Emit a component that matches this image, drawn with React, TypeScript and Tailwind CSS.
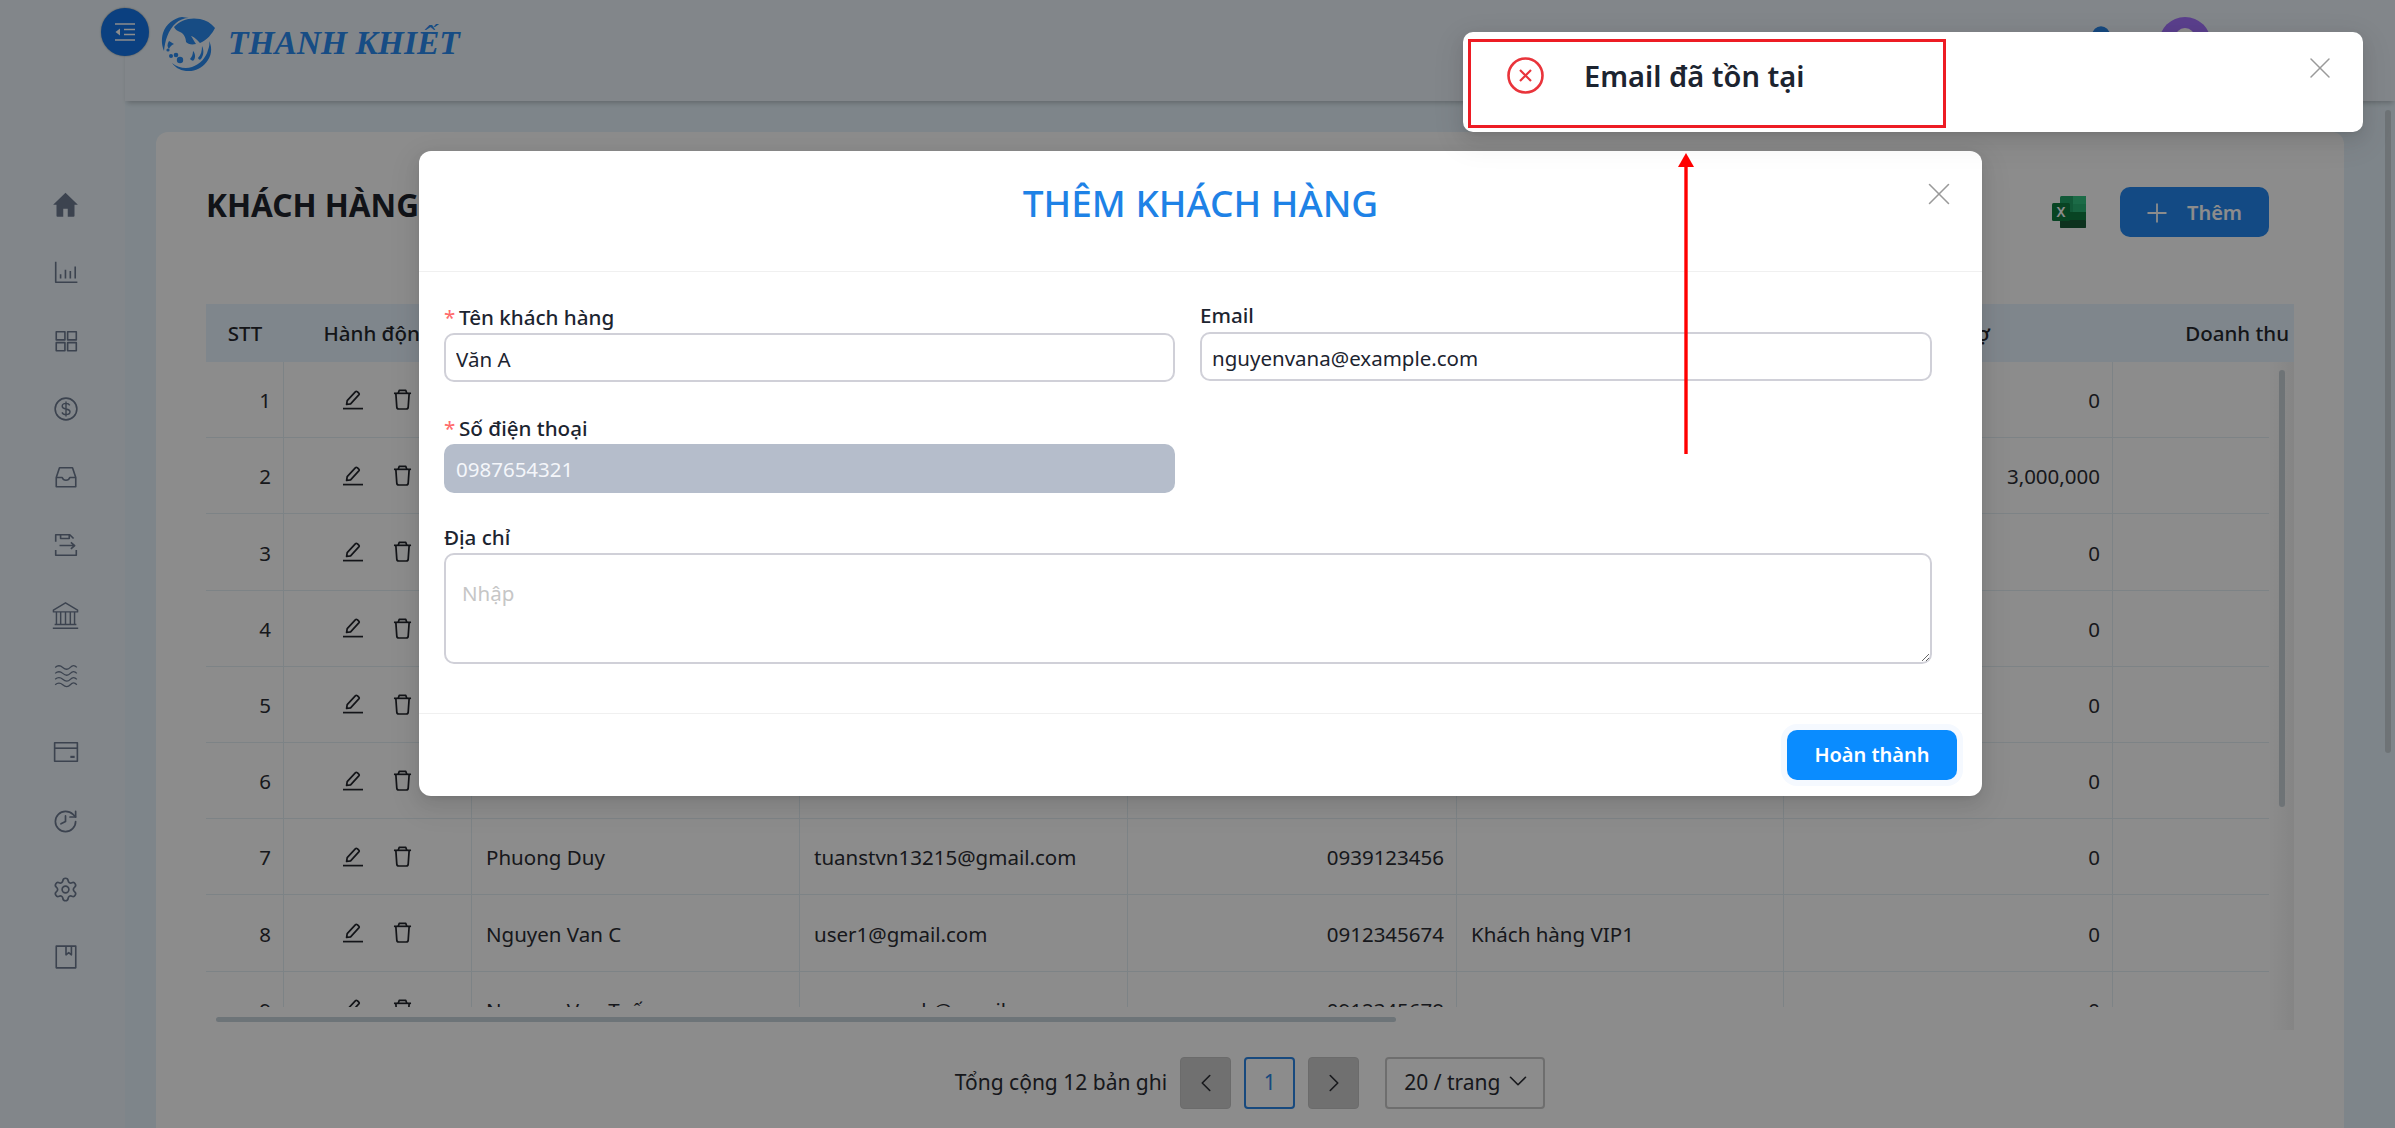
import React from "react";
import { X, ChevronLeft, ChevronRight, ChevronDown, Bell, Settings, History } from "lucide-react";

const S = ({ children, className = "" }: { children: React.ReactNode; className?: string }) => (
  <svg viewBox="0 0 24 24" fill="none" stroke="currentColor" strokeWidth="1.5" strokeLinejoin="round" className={"w-[26px] h-[26px] " + className}>
    {children}
  </svg>
);

const sideIcons: React.ReactNode[] = [
  <svg viewBox="0 0 24 24" className="w-[27px] h-[27px]" fill="currentColor"><path d="M12 1.5 1 12.3h3V22a.8.8 0 0 0 .8.8h5.2v-7h4v7h5.2A.8.8 0 0 0 20 22v-9.7h3z" /></svg>,
  <S><path d="M2.5 2.5V21.5H22.5" /><path d="M7 18v-4M11.5 18V10M16 18v-7M20.5 18V7" /></S>,
  <S><rect x="3" y="3.5" width="8" height="7.5" /><rect x="13.5" y="3.5" width="8" height="7.5" /><rect x="3" y="13.5" width="8" height="7.5" /><rect x="13.5" y="13.5" width="8" height="7.5" /></S>,
  <S><circle cx="12" cy="12" r="10" /><path d="M15.5 8.7c-.6-1.2-2-1.9-3.5-1.9-2 0-3.5 1-3.5 2.6 0 3.6 7.2 1.6 7.2 5.2 0 1.6-1.6 2.6-3.7 2.6-1.6 0-3.1-.8-3.7-2.1M12 5v14" strokeWidth="1.3" /></S>,
  <S><path d="M3 12.5 6 3.5h12l3 9V21H3z" /><path d="M3 12.5h5.5c.6 1.7 1.9 2.5 3.5 2.5s2.9-.8 3.5-2.5H21" /></S>,
  <S><path d="M2.5 9V2.5h13L19 6" /><path d="M7 2.5V6h8V2.5" /><path d="M6 12.5h14M16.5 9.5l3.5 3-3.5 3" /><path d="M2.5 16.5V21.5h19v-5" /></S>,
  <svg viewBox="0 0 24 24" fill="none" stroke="currentColor" strokeWidth="1.2" strokeLinejoin="round" className="w-[29px] h-[29px]"><path d="M12 1.5 2 7.5v1.5h20V7.5z" /><path d="M4.5 9v10M8 9v10M12 9v10M16 9v10M19.5 9v10" /><path d="M3 19.5h18M1.5 22.5h21" /></svg>,
  <S><path d="M2 5c2.5-2.2 4.5-2.2 7 0s5 2.2 7 0 4-2.2 6 0M2 10.5c2.5-2.2 4.5-2.2 7 0s5 2.2 7 0 4-2.2 6 0M2 16c2.5-2.2 4.5-2.2 7 0s5 2.2 7 0 4-2.2 6 0M2 21c2.5-2.2 4.5-2.2 7 0s5 2.2 7 0 4-2.2 6 0" strokeWidth="1.2" /></S>,
  <S><rect x="1.5" y="3.5" width="21" height="17" /><path d="M1.5 8.5h21" /><path d="M16 16.5h4" strokeWidth="2" /></S>,
  <History className="w-[27px] h-[27px] -scale-x-100" strokeWidth={1.5} />,
  <Settings className="w-[27px] h-[27px]" strokeWidth={1.5} />,
  <S><rect x="3" y="2" width="18" height="20" /><path d="M12 2v8l2.5-2 2.5 2V2" /></S>,
];
const sideGaps = ["mb-[38px]", "mb-[39px]", "mb-[38px]", "mb-[38px]", "mb-[38px]", "mb-[40px]", "mb-[30px]", "mb-[47px]", "mb-[39px]", "mb-[38px]", "mb-[38px]", ""];

const EditIcon = () => (
  <svg viewBox="0 0 20 20" fill="none" stroke="currentColor" strokeWidth="1.7" className="w-[20px] h-[20px]">
    <path d="M3.6 14.5 4.2 10.6 12.3 1.8c.6-.6 1.3-.6 1.9-.1l1.5 1.3c.6.6.6 1.3.1 1.9L7.6 13.8z" strokeLinejoin="round" />
    <path d="M0 18.6h20" />
  </svg>
);
const TrashIcon = () => (
  <svg viewBox="0 0 20 22" fill="none" stroke="currentColor" strokeWidth="1.8" strokeLinejoin="round" className="w-[19px] h-[21px]">
    <path d="M1 4.5h18" />
    <path d="M5.5 4.5 6.5 1.5h7l1 3" />
    <path d="M3 4.5 4 19c.1 1.2.8 2 2 2h8c1.2 0 1.9-.8 2-2l1-14.5" />
  </svg>
);

const rows = [
  { n: 1, debt: "0" },
  { n: 2, debt: "3,000,000" },
  { n: 3, debt: "0" },
  { n: 4, debt: "0" },
  { n: 5, debt: "0" },
  { n: 6, debt: "0" },
  { n: 7, name: "Phuong Duy", email: "tuanstvn13215@gmail.com", phone: "0939123456", debt: "0" },
  { n: 8, name: "Nguyen Van C", email: "user1@gmail.com", phone: "0912345674", note: "Khách hàng VIP1", debt: "0" },
  { n: 9, name: "Nguyen Van Tuấn", email: "nguyenvanb@gmail.com", phone: "0912345678", debt: "0" },
];

const cols = "grid grid-cols-[78px_188px_328px_328px_329px_327px_329px_181px]";
const cell = "pl-[14px] pr-[12px] pt-[2px] flex items-center border-r border-[#e3eef5] whitespace-nowrap";

const Logo = () => (
  <svg viewBox="0 0 58 56" className="w-[58px] h-[56px]" fill="#2a8af0">
    <path d="M22 2C14 3 6 9 3 18 1 25 2 31 4 36 5 26 8 15 16 8 19 5 24 3 29 3z" />
    <path d="M14 12c6-7 16-10 26-8 6 1 11 4 15 9-3 6-8 12-15 15-2-2-5-6-9-7 2 3 3 5 5 8-5 1-8 0-10-2 0-5-3-9-6-10-3-1-5-3-6-5z" />
    <path d="M9 26c-2 3-2 6 0 8 1-2 2-4 5-5-2-1-3-2-5-3z" />
    <circle cx="11" cy="41" r="2" /><circle cx="8" cy="35" r="1.6" /><circle cx="16" cy="40" r="2.3" /><circle cx="20" cy="45" r="3.2" />
    <path d="M12 48c6 5 14 6 20 4 8-3 14-9 16-17 1-3 2-6 1-9 3 5 3 13-1 19-5 8-13 12-22 11-7-1-11-4-14-8z" />
    <path d="M30 44c2-2 3-5 3-8 2 2 3 6 1 9-1 1-2 1-4-1zM38 43c3-3 4-7 4-12 2 4 2 9-1 13-1 1-2 1-3-1z" />
  </svg>
);

const shadow = "shadow-[0_6px_16px_rgba(0,0,0,0.08),0_3px_6px_-4px_rgba(0,0,0,0.12),0_9px_28px_8px_rgba(0,0,0,0.05)]";

export default function App() {
  return (
    <div className="relative w-[2395px] h-[1128px] overflow-hidden bg-[#e6f3fb] font-['Noto_Sans','Open_Sans',sans-serif] text-[#2b2d33]">
      <div className="flex h-full">
        <aside className="w-[125px] shrink-0 bg-[#edf5fb] pt-[189px] pl-[6px] text-[#6d7a91] flex flex-col items-center">
          {sideIcons.map((node, i) => (
            <div key={i} className={"flex items-center justify-center h-[30px] " + sideGaps[i]}>
              {node}
            </div>
          ))}
        </aside>
        <div className="flex-1 min-w-0 flex flex-col">
          <header className="h-[101px] shrink-0 bg-[#edf5fb] shadow-[0_4px_5px_-2px_rgba(0,0,0,0.22)] flex items-start pl-[35px] relative">
            <div className="mt-[15px]"><Logo /></div>
            <span className="ml-[10px] mt-[20px] font-['Liberation_Serif',serif] italic font-bold text-[33.5px] leading-[46px] text-[#2a8af0] whitespace-nowrap">THANH KHIẾT</span>
            <div className="ml-auto mr-[184px] mt-[17px] flex items-start gap-[43px]">
              <Bell className="w-[30px] h-[30px] mt-[8px] text-[#2a85e6]" fill="#2a85e6" />
              <div className="w-[52px] h-[52px] rounded-full bg-[#a574ff] flex justify-center pt-[11px]">
                <div className="w-[20px] h-[20px] rounded-full bg-white" />
              </div>
            </div>
          </header>
          <main className="flex-1 pl-[31px] pt-[31px] min-h-0">
            <section className="w-[2188px] h-[1000px] bg-white rounded-t-[12px] px-[50px] pt-[55px]">
              <div className="flex items-center h-[50px] pr-[25px]">
                <h1 className="text-[31.5px] font-bold text-[#20242c] leading-none mb-[14px]">KHÁCH HÀNG</h1>
                <svg viewBox="0 0 34 32" className="w-[34px] h-[32px] ml-auto mr-[34px]">
                  <rect x="8" y="0" width="26" height="32" rx="1.5" fill="#21a366" />
                  <rect x="21" y="8" width="13" height="8" fill="#33c481" opacity=".55" />
                  <rect x="21" y="0" width="13" height="8" fill="#33c481" />
                  <rect x="8" y="16" width="26" height="8" fill="#107c41" />
                  <rect x="8" y="24" width="26" height="8" fill="#185c37" rx="1" />
                  <rect x="0" y="7" width="18" height="18" rx="1.5" fill="#107c41" />
                  <text x="4.5" y="21" fontSize="14" fontWeight="600" fill="#fff" fontFamily="Noto Sans, sans-serif">X</text>
                </svg>
                <button className="w-[149px] h-[50px] rounded-[10px] bg-[#2387f0] text-white flex items-center pl-[21px] pt-[2px] text-[20px] font-semibold">
                  <svg viewBox="0 0 32 32" className="w-[32px] h-[32px] mr-[14px]" fill="none" stroke="currentColor" strokeWidth="1.8"><path d="M16 6.5v19M6.5 16h19" /></svg>
                  Thêm
                </button>
              </div>
              <div className="mt-[67px] w-[2088px] h-[726px] relative overflow-hidden">
                <div className={cols + " h-[58px] bg-[#e7f5ff] text-[20.5px] font-medium text-[#25272d]"}>
                  <div className="flex items-center justify-center">STT</div>
                  <div className="flex items-center justify-center whitespace-nowrap">Hành động</div>
                  <div /><div /><div /><div />
                  <div className="flex items-center justify-center">Công nợ</div>
                  <div className="flex items-center justify-end pr-[5px] whitespace-nowrap">Doanh thu</div>
                </div>
                <div className="w-[2063px] h-[645px] overflow-hidden text-[20.5px]">
                  {rows.map((r) => (
                    <div key={r.n} className={cols + " h-[76.2px] border-b border-[#e3eef5]"}>
                      <div className={cell + " justify-end"}>{r.n}</div>
                      <div className="flex items-center justify-center gap-[30px] border-r border-[#e3eef5] text-[#23262d]"><EditIcon /><TrashIcon /></div>
                      <div className={cell}>{r.name}</div>
                      <div className={cell}>{r.email}</div>
                      <div className={cell + " justify-end"}>{r.phone}</div>
                      <div className={cell}>{r.note}</div>
                      <div className={cell + " justify-end"}>{r.debt}</div>
                      <div className={cell + " border-r-0"} />
                    </div>
                  ))}
                </div>
                <div className="absolute right-0 top-[58px] bottom-0 w-[25px] bg-gradient-to-r from-transparent to-[#f2f2f2]" />
                <div className="absolute left-[2073px] top-[66px] w-[6px] h-[437px] rounded-full bg-[#c9d2d8]" />
                <div className="absolute left-[10px] top-[713px] w-[1180px] h-[5px] rounded-full bg-[#c6d3db]" />
              </div>
              <div className="mt-[27px] flex items-center justify-center h-[52px] text-[21px]">
                <span className="mr-[13px] whitespace-nowrap">Tổng cộng 12 bản ghi</span>
                <button className="w-[51px] h-[52px] rounded-[4px] bg-[#cccccc] border border-[#c4c4c4] flex items-center justify-center"><ChevronLeft className="w-[30px] h-[30px]" strokeWidth={1.3} /></button>
                <button className="ml-[13px] w-[51px] h-[52px] rounded-[4px] border-2 border-[#2a85e6] text-[#2a85e6] flex items-center justify-center">1</button>
                <button className="ml-[13px] w-[51px] h-[52px] rounded-[4px] bg-[#cccccc] border border-[#c4c4c4] flex items-center justify-center"><ChevronRight className="w-[30px] h-[30px]" strokeWidth={1.3} /></button>
                <div className="ml-[26px] w-[160px] h-[52px] rounded-[4px] border-2 border-[#c9c9c9] flex items-center pl-[17px] whitespace-nowrap">
                  20 / trang
                  <ChevronDown className="w-[30px] h-[30px] ml-[3px] -mt-[4px]" strokeWidth={1.3} />
                </div>
              </div>
            </section>
          </main>
        </div>
      </div>

      <div className="absolute left-[2385px] top-[110px] w-[6px] h-[643px] rounded-full bg-[#c9d2d8]" />
      <button className="absolute left-[101px] top-[8px] w-[48px] h-[48px] rounded-full bg-[#1476e9] text-white flex items-center justify-center shadow-[0_0_2px_rgba(0,0,0,0.4)]">
        <svg viewBox="0 0 20 20" className="w-[20px] h-[20px]" fill="none" stroke="currentColor" strokeWidth="1.4">
          <path d="M0 2h20M9 7.5h11M9 12.5h11M0 18h20" />
          <path d="M5 6.5 0.5 10 5 13.5z" fill="currentColor" stroke="none" />
        </svg>
      </button>

      {/* mask */}
      <div className="absolute inset-0 bg-black/45" />

      {/* modal */}
      <div className={"absolute left-[419px] top-[151px] w-[1563px] h-[645px] bg-white rounded-[12px] flex flex-col text-[#1c2430] " + shadow}>
        <div className="h-[121px] shrink-0 border-b border-[#f0f0f0] flex items-start justify-center relative">
          <h2 className="mt-[24px] text-[37px] leading-[56px] font-medium text-[#1e82e6] whitespace-nowrap">THÊM KHÁCH HÀNG</h2>
          <X className="absolute left-[1501px] top-[24px] w-[38px] h-[38px] text-[#9a9a9a]" strokeWidth={1} />
        </div>
        <div className="flex-1 pl-[25px] pt-[30px]">
          <div className="w-[1488px] grid grid-cols-[731px_732px] gap-x-[25px]">
            <div>
              <label className="flex items-center h-[31px] text-[20.6px] font-medium leading-none whitespace-nowrap">
                <span className="text-[#ff6b6b] font-normal mr-[6px] w-[9px]">*</span>Tên khách hàng
              </label>
              <input readOnly value="Văn A" className="w-full h-[49px] rounded-[10px] border-2 border-[#d0d0d8] px-[10px] pt-[2px] text-[20.5px] outline-none" />
            </div>
            <div className="-mt-[1px]">
              <label className="flex items-center h-[31px] pb-[2px] text-[20.6px] font-medium leading-none">Email</label>
              <input readOnly value="nguyenvana@example.com" className="w-full h-[49px] rounded-[10px] border-2 border-[#d0d0d8] px-[10px] pt-[2px] text-[20.5px] outline-none" />
            </div>
            <div className="mt-[31px]">
              <label className="flex items-center h-[31px] text-[20.6px] font-medium leading-none whitespace-nowrap">
                <span className="text-[#ff6b6b] font-normal mr-[6px] w-[9px]">*</span>Số điện thoại
              </label>
              <input readOnly value="0987654321" className="w-full h-[49px] rounded-[10px] bg-[#b5bdcb] text-[#f4f6fa] px-[12px] text-[20.5px] outline-none" />
            </div>
            <div />
            <div className="col-span-2 mt-[30px]">
              <label className="flex items-center h-[30px] pb-[2px] text-[20.6px] font-medium leading-none">Địa chỉ</label>
              <textarea placeholder="Nhập" className="block w-full h-[111px] rounded-[10px] border-2 border-[#d0d0d8] px-[16px] pt-[23px] text-[20.5px] outline-none placeholder:text-[#c6c6c6]" />
            </div>
          </div>
        </div>
        <div className="h-[83px] shrink-0 border-t border-[#f0f0f0] flex items-start justify-end pr-[25px] pt-[16px]">
          <button className="w-[170px] h-[50px] rounded-[10px] bg-[#0a8cff] text-white text-[20px] font-semibold shadow-[0_0_0_6px_#f5f9ff]">Hoàn thành</button>
        </div>
      </div>

      {/* toast */}
      <div className={"absolute left-[1463px] top-[32px] w-[900px] h-[100px] bg-white rounded-[10px] flex items-start pl-[44px] pt-[25px] text-[#1c2430] " + shadow}>
        <svg viewBox="0 0 37 37" className="w-[37px] h-[37px] shrink-0" fill="none" stroke="#e9343b" strokeWidth="2.6">
          <circle cx="18.5" cy="18.5" r="17" />
          <path d="M13 13l11 11M24 13 13 24" strokeWidth="2.2" />
        </svg>
        <span className="ml-[40px] text-[29px] leading-[38px] font-[560] whitespace-nowrap">Email đã tồn tại</span>
        <X className="ml-auto mr-[25px] -mt-[7px] w-[36px] h-[36px] text-[#9a9a9a] shrink-0" strokeWidth={1} />
        <div className="absolute left-[5px] top-[7px] w-[478px] h-[89px] border-[3px] border-[#ed1c24]" />
      </div>

      {/* annotation arrow */}
      <svg viewBox="0 0 16 301" className="absolute left-[1678px] top-[153px] w-[16px] h-[301px]">
        <path d="M8 0 16 14H0z" fill="#ff0000" />
        <path d="M8 12V301" stroke="#ff0000" strokeWidth="3.4" />
      </svg>
    </div>
  );
}
